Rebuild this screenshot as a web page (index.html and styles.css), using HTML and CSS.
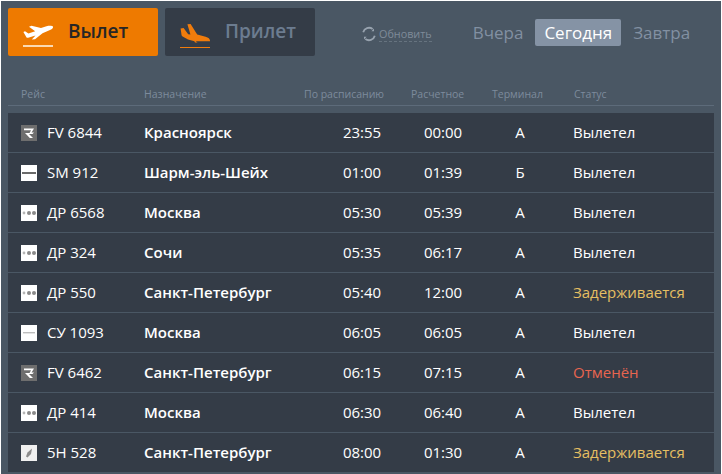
FILE: index.html
```html
<!DOCTYPE html>
<html lang="ru">
<head>
    <meta charset="utf-8">
    <meta name="viewport" content="width=device-width, initial-scale=1">
    <title>Табло вылета</title>
    <link rel="stylesheet" href="styles.css">
</head>
<body>

<svg class="sprite" width="0" height="0">
    <symbol id="logo-fv" viewBox="0 0 16 16">
        <rect width="16" height="16" fill="#6e6e6e"/>
        <path d="M3 3.5H13L10.5 7.5H13L11.5 9H8L12 13H8.8L4 8H8.6L10 5.2H3Z" fill="#fff"/>
    </symbol>
    <symbol id="logo-sm" viewBox="0 0 16 16">
        <rect width="16" height="16" fill="#fff"/>
        <rect x="1" y="7" width="14" height="2" fill="#6a6a6a"/>
    </symbol>
    <symbol id="logo-dp" viewBox="0 0 16 16">
        <rect width="16" height="16" fill="#fff"/>
        <circle cx="3" cy="8" r="1.4" fill="#b5b5b5"/>
        <circle cx="8" cy="8" r="2" fill="#8a8a8a"/>
        <circle cx="13" cy="8" r="2" fill="#8a8a8a"/>
    </symbol>
    <symbol id="logo-su" viewBox="0 0 16 16">
        <rect width="16" height="16" fill="#fff"/>
        <rect x="2" y="7" width="12" height="1.4" fill="#bdbdbd"/>
    </symbol>
    <symbol id="logo-5h" viewBox="0 0 16 16">
        <rect width="16" height="16" fill="#f0f0f0"/>
        <path d="M11 3.5L10 9L6.5 12.5L5 11.5L6.5 7.5Z" fill="#8c8c8c"/>
    </symbol>
</svg>

<div class="board">
    <div class="top">
        <a class="tab tab-active">
            <svg class="tab-icon" width="30" height="22" viewBox="0 0 30 22">
                <path d="M30 1.6C29.4 .6 26.5 .4 23.5 1.2L18 3 8.5 .8 6 1.8 12.2 6.2 5.4 8.4 2 6.2.4 7 3.4 12.2C3.8 13 4.6 13 6 12.6L12.5 10.6 8.8 14.6 12 14.2 19.5 8.2 27 5C29 4.2 30.4 2.6 30 1.6Z" fill="#fff"/>
                <rect y="20" width="30" height="2" fill="#fbd9b0"/>
            </svg>
            Вылет
        </a>
        <a class="tab">
            <svg class="tab-icon" width="30" height="24" viewBox="0 0 30 24">
                <path d="M.6 4.6 3.6 4 8.2 10.2 10.4 10.6 7.4 .2 10.6 0 17.2 10.6 25.6 12.8C28.4 13.6 30 15 30 16.6V17.2H15.6L17.6 18.4 15 18.6 14.4 17.2 8 15.6 2.6 12.6C1.8 12 1.4 11.2 1.4 10Z" fill="#f07c0c"/>
                <rect y="23" width="30" height="1" fill="#f07c0c"/>
            </svg>
            Прилет
        </a>
        <a class="refresh">
            <svg width="16" height="16" viewBox="0 0 16 16">
                <path d="M2.2 6.2A6 6 0 0 1 11.6 3M13.8 9.8A6 6 0 0 1 4.4 13" fill="none" stroke="#98a3af" stroke-width="1.8"/>
                <path d="M13 2.6V5.2H10.4ZM3 13.4V10.8H5.6Z" fill="#98a3af"/>
            </svg>
            <span class="refresh-text">Обновить</span>
        </a>
        <div class="days">
            <a class="day">Вчера</a>
            <a class="day day-active">Сегодня</a>
            <a class="day">Завтра</a>
        </div>
    </div>

    <div class="head">
        <span>Рейс</span>
        <span>Назначение</span>
        <span>По расписанию</span>
        <span>Расчетное</span>
        <span>Терминал</span>
        <span>Статус</span>
    </div>

    <div class="flights">
        <div class="row">
            <svg class="logo"><use href="#logo-fv"/></svg>
            <span>FV 6844</span>
            <span class="city">Красноярск</span>
            <span class="mid">23:55</span>
            <span class="mid">00:00</span>
            <span class="mid">А</span>
            <span class="status">Вылетел</span>
        </div>
        <div class="row">
            <svg class="logo"><use href="#logo-sm"/></svg>
            <span>SM 912</span>
            <span class="city">Шарм-эль-Шейх</span>
            <span class="mid">01:00</span>
            <span class="mid">01:39</span>
            <span class="mid">Б</span>
            <span class="status">Вылетел</span>
        </div>
        <div class="row">
            <svg class="logo"><use href="#logo-dp"/></svg>
            <span>ДР 6568</span>
            <span class="city">Москва</span>
            <span class="mid">05:30</span>
            <span class="mid">05:39</span>
            <span class="mid">А</span>
            <span class="status">Вылетел</span>
        </div>
        <div class="row">
            <svg class="logo"><use href="#logo-dp"/></svg>
            <span>ДР 324</span>
            <span class="city">Сочи</span>
            <span class="mid">05:35</span>
            <span class="mid">06:17</span>
            <span class="mid">А</span>
            <span class="status">Вылетел</span>
        </div>
        <div class="row">
            <svg class="logo"><use href="#logo-dp"/></svg>
            <span>ДР 550</span>
            <span class="city">Санкт-Петербург</span>
            <span class="mid">05:40</span>
            <span class="mid">12:00</span>
            <span class="mid">А</span>
            <span class="status delayed">Задерживается</span>
        </div>
        <div class="row">
            <svg class="logo"><use href="#logo-su"/></svg>
            <span>СУ 1093</span>
            <span class="city">Москва</span>
            <span class="mid">06:05</span>
            <span class="mid">06:05</span>
            <span class="mid">А</span>
            <span class="status">Вылетел</span>
        </div>
        <div class="row">
            <svg class="logo"><use href="#logo-fv"/></svg>
            <span>FV 6462</span>
            <span class="city">Санкт-Петербург</span>
            <span class="mid">06:15</span>
            <span class="mid">07:15</span>
            <span class="mid">А</span>
            <span class="status canceled">Отменён</span>
        </div>
        <div class="row">
            <svg class="logo"><use href="#logo-dp"/></svg>
            <span>ДР 414</span>
            <span class="city">Москва</span>
            <span class="mid">06:30</span>
            <span class="mid">06:40</span>
            <span class="mid">А</span>
            <span class="status">Вылетел</span>
        </div>
        <div class="row">
            <svg class="logo"><use href="#logo-5h"/></svg>
            <span>5H 528</span>
            <span class="city">Санкт-Петербург</span>
            <span class="mid">08:00</span>
            <span class="mid">01:30</span>
            <span class="mid">А</span>
            <span class="status delayed">Задерживается</span>
        </div>
    </div>
</div>

</body>
</html>
```

FILE: styles.css
```css
html, body {
    height: 100%;
}
body {
    margin: 0;
    padding: 1px 1px 0 1px;
    box-sizing: border-box;
    overflow: hidden;
    background-color: #fff;
    font-family: "Open Sans", "Noto Sans", sans-serif;
    font-size: 15px;
    color: #fff;
}
.sprite {
    position: absolute;
}
.board {
    height: 473px;
    padding: 7px 7px 0 7px;
    box-sizing: border-box;
    background-color: #4a5764;
}
.top {
    display: flex;
    align-items: flex-start;
    height: 48px;
}
.tab {
    display: flex;
    align-items: center;
    width: 150px;
    height: 48px;
    margin-right: 7px;
    padding: 0 0 2px 15px;
    box-sizing: border-box;
    background-color: #343c47;
    border-radius: 2px;
    color: #6c7c90;
    font-size: 19px;
    font-weight: 600;
}
.tab-active {
    background-color: #ee7a00;
    color: #262626;
}
.tab-icon {
    margin-right: 15px;
    margin-top: 10px;
}
.refresh {
    display: flex;
    align-items: center;
    margin-left: 39px;
    margin-top: 18px;
    color: #7f8b99;
    font-size: 10.8px;
}
.refresh-text {
    margin-left: 2px;
    border-bottom: 1px dashed #66737f;
}
.days {
    display: flex;
    margin-left: 31px;
    margin-top: 11px;
}
.day {
    display: flex;
    align-items: center;
    height: 27px;
    padding: 0 10px;
    border-radius: 2px;
    color: #8290a2;
    font-size: 17px;
    margin-right: 2px;
}
.day-active {
    padding: 0 9px;
    background-color: #8593a5;
    color: #fff;
    font-weight: 500;
}
.head {
    display: grid;
    grid-template-columns: 123px 160px 107px 81px 82px 1fr;
    height: 50px;
    padding: 30px 0 0 13px;
    box-sizing: border-box;
    border-bottom: 1px solid #5d6b7a;
    color: #7d8b9c;
    font-size: 10.5px;
    line-height: 16px;
}
.flights {
    margin-top: 7px;
}
.row {
    display: grid;
    grid-template-columns: 26px 97px 179px 78px 84px 70px 1fr;
    align-items: center;
    height: 40px;
    padding: 0 0 2px 13px;
    box-sizing: border-box;
    background-color: #343c47;
    border-bottom: 1px solid #4a5764;
}
.logo {
    width: 16px;
    height: 16px;
    margin-top: 2px;
}
.city {
    font-weight: 600;
}
.mid {
    text-align: center;
}
.status {
    padding-left: 18px;
}
.delayed {
    color: #e6bf62;
}
.canceled {
    color: #e8654f;
}
```
